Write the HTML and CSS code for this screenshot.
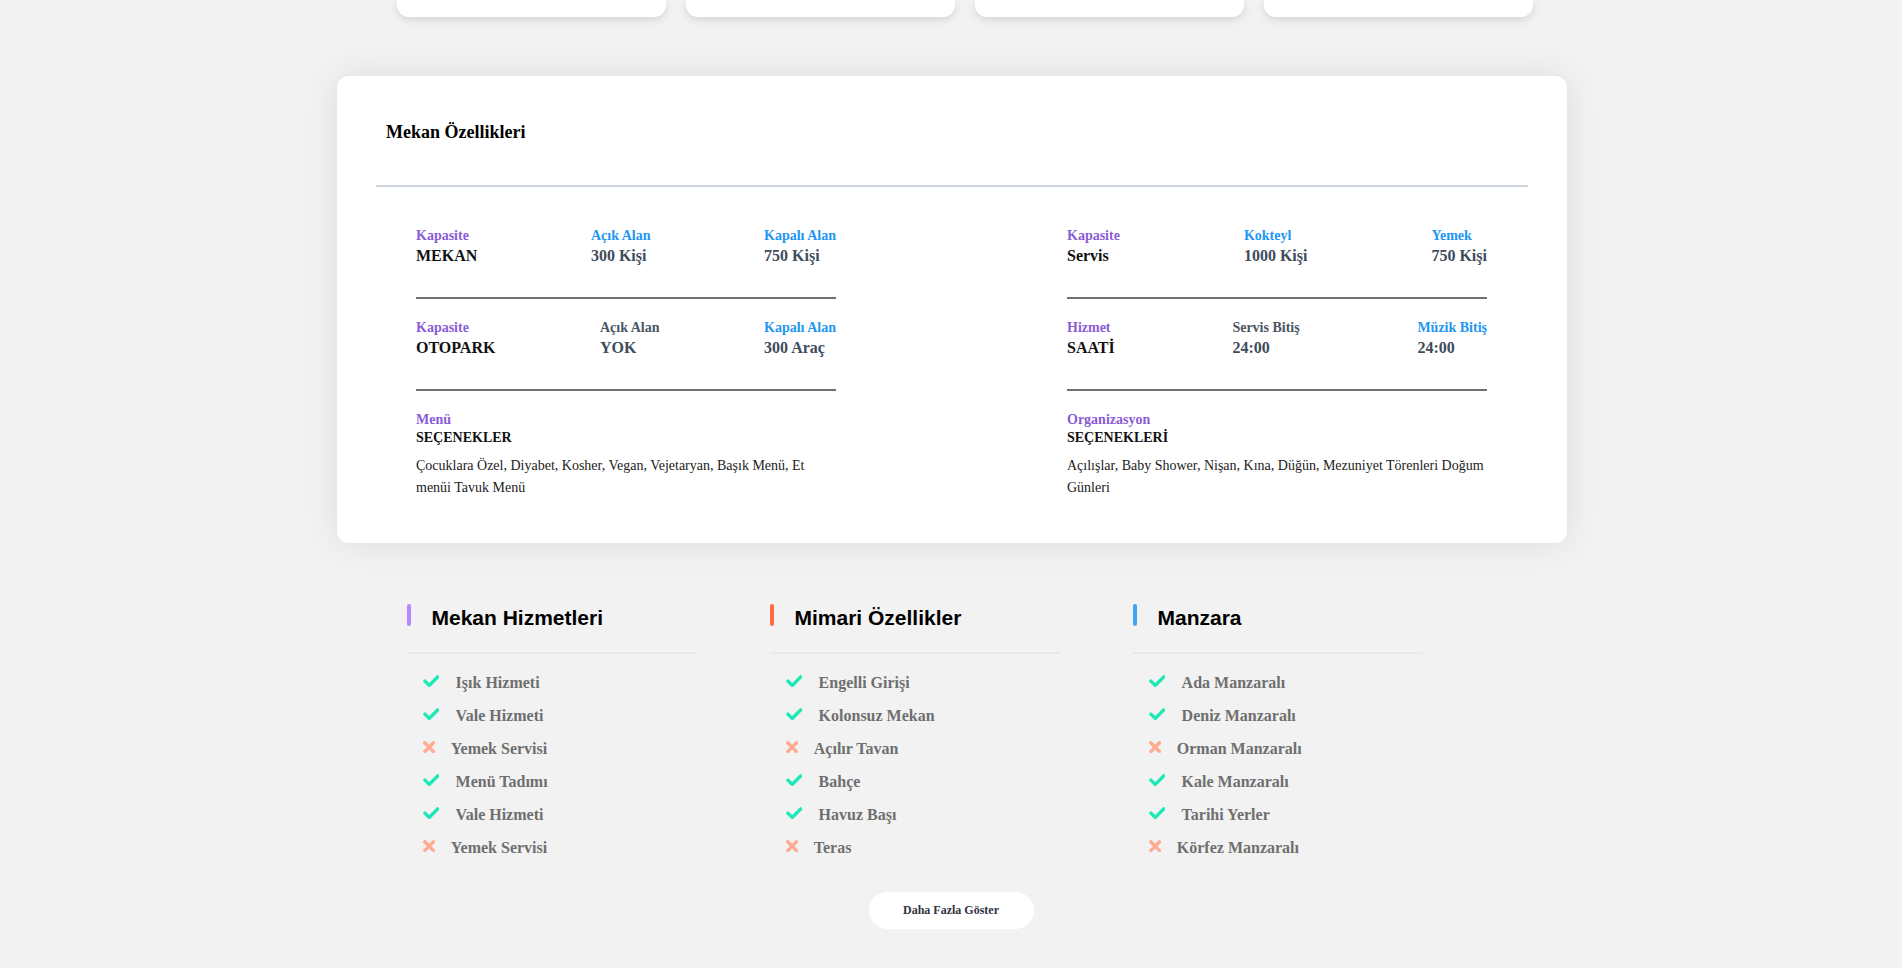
FILE: index.html
```html
<!DOCTYPE html>
<html lang="tr">
<head>
<meta charset="utf-8">
<title>Mekan Özellikleri</title>
<link rel="stylesheet" href="styles.css">
</head>
<body>
<div class="top-cards">
  <div class="top-card"></div>
  <div class="top-card"></div>
  <div class="top-card"></div>
  <div class="top-card"></div>
</div>

<section class="main-card">
  <h3 class="main-title">Mekan Özellikleri</h3>
  <div class="main-divider"></div>
  <div class="groups">
    <div class="group">
      <div class="spec-row">
        <div class="cell"><div class="lbl purple">Kapasite</div><div class="val black">MEKAN</div></div>
        <div class="cell"><div class="lbl blue">Açık Alan</div><div class="val slate">300 Kişi</div></div>
        <div class="cell"><div class="lbl blue">Kapalı Alan</div><div class="val slate">750 Kişi</div></div>
      </div>
      <div class="spec-row">
        <div class="cell"><div class="lbl purple">Kapasite</div><div class="val black">OTOPARK</div></div>
        <div class="cell"><div class="lbl grey">Açık Alan</div><div class="val slate">YOK</div></div>
        <div class="cell"><div class="lbl blue">Kapalı Alan</div><div class="val slate">300 Araç</div></div>
      </div>
      <div class="options">
        <div class="lbl purple">Menü</div>
        <div class="opt-title">SEÇENEKLER</div>
        <p class="opt-text">Çocuklara Özel, Diyabet, Kosher, Vegan, Vejetaryan, Başık Menü, Et menüi Tavuk Menü</p>
      </div>
    </div>
    <div class="group">
      <div class="spec-row">
        <div class="cell"><div class="lbl purple">Kapasite</div><div class="val black">Servis</div></div>
        <div class="cell"><div class="lbl blue">Kokteyl</div><div class="val slate">1000 Kişi</div></div>
        <div class="cell"><div class="lbl blue">Yemek</div><div class="val slate">750 Kişi</div></div>
      </div>
      <div class="spec-row">
        <div class="cell"><div class="lbl purple">Hizmet</div><div class="val black">SAATİ</div></div>
        <div class="cell"><div class="lbl grey">Servis Bitiş</div><div class="val slate">24:00</div></div>
        <div class="cell"><div class="lbl blue">Müzik Bitiş</div><div class="val slate">24:00</div></div>
      </div>
      <div class="options">
        <div class="lbl purple">Organizasyon</div>
        <div class="opt-title">SEÇENEKLERİ</div>
        <p class="opt-text">Açılışlar, Baby Shower, Nişan, Kına, Düğün, Mezuniyet Törenleri Doğum Günleri</p>
      </div>
    </div>
  </div>
</section>

<section class="features">
  <div class="feat-col">
    <div class="feat-head"><span class="bar bar-purple"></span><h4 class="feat-title">Mekan Hizmetleri</h4></div>
    <ul class="feat-list">
      <li class="yes"><svg class="ic-check" viewBox="0 64 512 384"><path d="M173.898 439.404l-166.4-166.4c-9.997-9.997-9.997-26.206 0-36.204l36.203-36.204c9.997-9.998 26.207-9.998 36.204 0L192 312.69 432.095 72.596c9.997-9.997 26.207-9.997 36.204 0l36.203 36.204c9.997 9.997 9.997 26.206 0 36.204l-294.4 294.401c-9.998 9.997-26.207 9.997-36.204-.001z"/></svg>Işık Hizmeti</li>
      <li class="yes"><svg class="ic-check" viewBox="0 64 512 384"><path d="M173.898 439.404l-166.4-166.4c-9.997-9.997-9.997-26.206 0-36.204l36.203-36.204c9.997-9.998 26.207-9.998 36.204 0L192 312.69 432.095 72.596c9.997-9.997 26.207-9.997 36.204 0l36.203 36.204c9.997 9.997 9.997 26.206 0 36.204l-294.4 294.401c-9.998 9.997-26.207 9.997-36.204-.001z"/></svg>Vale Hizmeti</li>
      <li class="no"><svg class="ic-times" viewBox="0 80 352 352"><path d="M242.72 256l100.07-100.07c12.28-12.28 12.28-32.19 0-44.48l-22.24-22.24c-12.28-12.28-32.19-12.28-44.48 0L176 189.28 75.93 89.21c-12.28-12.28-32.19-12.28-44.48 0L9.21 111.45c-12.28 12.28-12.28 32.19 0 44.48L109.28 256 9.21 356.07c-12.28 12.28-12.28 32.19 0 44.48l22.24 22.24c12.28 12.28 32.2 12.28 44.48 0L176 322.72l100.07 100.07c12.28 12.28 32.2 12.28 44.48 0l22.24-22.24c12.28-12.28 12.28-32.19 0-44.48L242.72 256z"/></svg>Yemek Servisi</li>
      <li class="yes"><svg class="ic-check" viewBox="0 64 512 384"><path d="M173.898 439.404l-166.4-166.4c-9.997-9.997-9.997-26.206 0-36.204l36.203-36.204c9.997-9.998 26.207-9.998 36.204 0L192 312.69 432.095 72.596c9.997-9.997 26.207-9.997 36.204 0l36.203 36.204c9.997 9.997 9.997 26.206 0 36.204l-294.4 294.401c-9.998 9.997-26.207 9.997-36.204-.001z"/></svg>Menü Tadımı</li>
      <li class="yes"><svg class="ic-check" viewBox="0 64 512 384"><path d="M173.898 439.404l-166.4-166.4c-9.997-9.997-9.997-26.206 0-36.204l36.203-36.204c9.997-9.998 26.207-9.998 36.204 0L192 312.69 432.095 72.596c9.997-9.997 26.207-9.997 36.204 0l36.203 36.204c9.997 9.997 9.997 26.206 0 36.204l-294.4 294.401c-9.998 9.997-26.207 9.997-36.204-.001z"/></svg>Vale Hizmeti</li>
      <li class="no"><svg class="ic-times" viewBox="0 80 352 352"><path d="M242.72 256l100.07-100.07c12.28-12.28 12.28-32.19 0-44.48l-22.24-22.24c-12.28-12.28-32.19-12.28-44.48 0L176 189.28 75.93 89.21c-12.28-12.28-32.19-12.28-44.48 0L9.21 111.45c-12.28 12.28-12.28 32.19 0 44.48L109.28 256 9.21 356.07c-12.28 12.28-12.28 32.19 0 44.48l22.24 22.24c12.28 12.28 32.2 12.28 44.48 0L176 322.72l100.07 100.07c12.28 12.28 32.2 12.28 44.48 0l22.24-22.24c12.28-12.28 12.28-32.19 0-44.48L242.72 256z"/></svg>Yemek Servisi</li>
    </ul>
  </div>
  <div class="feat-col">
    <div class="feat-head"><span class="bar bar-orange"></span><h4 class="feat-title">Mimari Özellikler</h4></div>
    <ul class="feat-list">
      <li class="yes"><svg class="ic-check" viewBox="0 64 512 384"><path d="M173.898 439.404l-166.4-166.4c-9.997-9.997-9.997-26.206 0-36.204l36.203-36.204c9.997-9.998 26.207-9.998 36.204 0L192 312.69 432.095 72.596c9.997-9.997 26.207-9.997 36.204 0l36.203 36.204c9.997 9.997 9.997 26.206 0 36.204l-294.4 294.401c-9.998 9.997-26.207 9.997-36.204-.001z"/></svg>Engelli Girişi</li>
      <li class="yes"><svg class="ic-check" viewBox="0 64 512 384"><path d="M173.898 439.404l-166.4-166.4c-9.997-9.997-9.997-26.206 0-36.204l36.203-36.204c9.997-9.998 26.207-9.998 36.204 0L192 312.69 432.095 72.596c9.997-9.997 26.207-9.997 36.204 0l36.203 36.204c9.997 9.997 9.997 26.206 0 36.204l-294.4 294.401c-9.998 9.997-26.207 9.997-36.204-.001z"/></svg>Kolonsuz Mekan</li>
      <li class="no"><svg class="ic-times" viewBox="0 80 352 352"><path d="M242.72 256l100.07-100.07c12.28-12.28 12.28-32.19 0-44.48l-22.24-22.24c-12.28-12.28-32.19-12.28-44.48 0L176 189.28 75.93 89.21c-12.28-12.28-32.19-12.28-44.48 0L9.21 111.45c-12.28 12.28-12.28 32.19 0 44.48L109.28 256 9.21 356.07c-12.28 12.28-12.28 32.19 0 44.48l22.24 22.24c12.28 12.28 32.2 12.28 44.48 0L176 322.72l100.07 100.07c12.28 12.28 32.2 12.28 44.48 0l22.24-22.24c12.28-12.28 12.28-32.19 0-44.48L242.72 256z"/></svg>Açılır Tavan</li>
      <li class="yes"><svg class="ic-check" viewBox="0 64 512 384"><path d="M173.898 439.404l-166.4-166.4c-9.997-9.997-9.997-26.206 0-36.204l36.203-36.204c9.997-9.998 26.207-9.998 36.204 0L192 312.69 432.095 72.596c9.997-9.997 26.207-9.997 36.204 0l36.203 36.204c9.997 9.997 9.997 26.206 0 36.204l-294.4 294.401c-9.998 9.997-26.207 9.997-36.204-.001z"/></svg>Bahçe</li>
      <li class="yes"><svg class="ic-check" viewBox="0 64 512 384"><path d="M173.898 439.404l-166.4-166.4c-9.997-9.997-9.997-26.206 0-36.204l36.203-36.204c9.997-9.998 26.207-9.998 36.204 0L192 312.69 432.095 72.596c9.997-9.997 26.207-9.997 36.204 0l36.203 36.204c9.997 9.997 9.997 26.206 0 36.204l-294.4 294.401c-9.998 9.997-26.207 9.997-36.204-.001z"/></svg>Havuz Başı</li>
      <li class="no"><svg class="ic-times" viewBox="0 80 352 352"><path d="M242.72 256l100.07-100.07c12.28-12.28 12.28-32.19 0-44.48l-22.24-22.24c-12.28-12.28-32.19-12.28-44.48 0L176 189.28 75.93 89.21c-12.28-12.28-32.19-12.28-44.48 0L9.21 111.45c-12.28 12.28-12.28 32.19 0 44.48L109.28 256 9.21 356.07c-12.28 12.28-12.28 32.19 0 44.48l22.24 22.24c12.28 12.28 32.2 12.28 44.48 0L176 322.72l100.07 100.07c12.28 12.28 32.2 12.28 44.48 0l22.24-22.24c12.28-12.28 12.28-32.19 0-44.48L242.72 256z"/></svg>Teras</li>
    </ul>
  </div>
  <div class="feat-col">
    <div class="feat-head"><span class="bar bar-blue"></span><h4 class="feat-title">Manzara</h4></div>
    <ul class="feat-list">
      <li class="yes"><svg class="ic-check" viewBox="0 64 512 384"><path d="M173.898 439.404l-166.4-166.4c-9.997-9.997-9.997-26.206 0-36.204l36.203-36.204c9.997-9.998 26.207-9.998 36.204 0L192 312.69 432.095 72.596c9.997-9.997 26.207-9.997 36.204 0l36.203 36.204c9.997 9.997 9.997 26.206 0 36.204l-294.4 294.401c-9.998 9.997-26.207 9.997-36.204-.001z"/></svg>Ada Manzaralı</li>
      <li class="yes"><svg class="ic-check" viewBox="0 64 512 384"><path d="M173.898 439.404l-166.4-166.4c-9.997-9.997-9.997-26.206 0-36.204l36.203-36.204c9.997-9.998 26.207-9.998 36.204 0L192 312.69 432.095 72.596c9.997-9.997 26.207-9.997 36.204 0l36.203 36.204c9.997 9.997 9.997 26.206 0 36.204l-294.4 294.401c-9.998 9.997-26.207 9.997-36.204-.001z"/></svg>Deniz Manzaralı</li>
      <li class="no"><svg class="ic-times" viewBox="0 80 352 352"><path d="M242.72 256l100.07-100.07c12.28-12.28 12.28-32.19 0-44.48l-22.24-22.24c-12.28-12.28-32.19-12.28-44.48 0L176 189.28 75.93 89.21c-12.28-12.28-32.19-12.28-44.48 0L9.21 111.45c-12.28 12.28-12.28 32.19 0 44.48L109.28 256 9.21 356.07c-12.28 12.28-12.28 32.19 0 44.48l22.24 22.24c12.28 12.28 32.2 12.28 44.48 0L176 322.72l100.07 100.07c12.28 12.28 32.2 12.28 44.48 0l22.24-22.24c12.28-12.28 12.28-32.19 0-44.48L242.72 256z"/></svg>Orman Manzaralı</li>
      <li class="yes"><svg class="ic-check" viewBox="0 64 512 384"><path d="M173.898 439.404l-166.4-166.4c-9.997-9.997-9.997-26.206 0-36.204l36.203-36.204c9.997-9.998 26.207-9.998 36.204 0L192 312.69 432.095 72.596c9.997-9.997 26.207-9.997 36.204 0l36.203 36.204c9.997 9.997 9.997 26.206 0 36.204l-294.4 294.401c-9.998 9.997-26.207 9.997-36.204-.001z"/></svg>Kale Manzaralı</li>
      <li class="yes"><svg class="ic-check" viewBox="0 64 512 384"><path d="M173.898 439.404l-166.4-166.4c-9.997-9.997-9.997-26.206 0-36.204l36.203-36.204c9.997-9.998 26.207-9.998 36.204 0L192 312.69 432.095 72.596c9.997-9.997 26.207-9.997 36.204 0l36.203 36.204c9.997 9.997 9.997 26.206 0 36.204l-294.4 294.401c-9.998 9.997-26.207 9.997-36.204-.001z"/></svg>Tarihi Yerler</li>
      <li class="no"><svg class="ic-times" viewBox="0 80 352 352"><path d="M242.72 256l100.07-100.07c12.28-12.28 12.28-32.19 0-44.48l-22.24-22.24c-12.28-12.28-32.19-12.28-44.48 0L176 189.28 75.93 89.21c-12.28-12.28-32.19-12.28-44.48 0L9.21 111.45c-12.28 12.28-12.28 32.19 0 44.48L109.28 256 9.21 356.07c-12.28 12.28-12.28 32.19 0 44.48l22.24 22.24c12.28 12.28 32.2 12.28 44.48 0L176 322.72l100.07 100.07c12.28 12.28 32.2 12.28 44.48 0l22.24-22.24c12.28-12.28 12.28-32.19 0-44.48L242.72 256z"/></svg>Körfez Manzaralı</li>
    </ul>
  </div>
</section>

<div class="more-wrap">
  <button class="more-btn" type="button">Daha Fazla Göster</button>
</div>
</body>
</html>
```

FILE: styles.css
```css
* { box-sizing: border-box; }

body {
  margin: 0;
  background: #f2f2f2;
  font-family: "Liberation Serif", "Times New Roman", serif;
  color: #111;
}

.top-cards {
  display: flex;
  gap: 20px;
  width: 1136px;
  margin-left: calc(50% - 554px);
}
.top-card {
  width: 269px;
  height: 17px;
  background: #fff;
  border-radius: 0 0 12px 12px;
  box-shadow: 0 3px 8px rgba(0, 0, 0, 0.12);
}

/* main card */
.main-card {
  width: 1230px;
  margin: 59px 0 0 calc(50% - 614px);
  background: #fff;
  border-radius: 12px;
  box-shadow: 0 0 36px rgba(0, 0, 0, 0.09);
  padding: 45px 39px 44px 39px;
}
.main-title {
  margin: 0;
  padding-left: 10px;
  font-size: 18px;
  line-height: 22px;
  font-weight: bold;
  color: #000;
}
.main-divider {
  margin-top: 42px;
  height: 2px;
  background: #ccd3da;
}
.groups {
  display: flex;
  justify-content: space-between;
  padding: 41px 41px 0 40px;
}
.group {
  width: 420px;
}
.spec-row {
  display: flex;
  justify-content: space-between;
  padding-bottom: 29px;
  border-bottom: 2px solid #707070;
  margin-bottom: 21px;
}
.lbl {
  font-size: 14px;
  line-height: 16px;
  font-weight: bold;
}
.val {
  font-size: 16px;
  line-height: 24px;
  font-weight: bold;
}
.purple { color: #8a5cd6; }
.blue { color: #2196f3; }
.grey { color: #4b5563; }
.black { color: #111; }
.slate { color: #3e4b5b; }

.opt-title {
  font-size: 14px;
  line-height: 19px;
  font-weight: bold;
  color: #111;
}
.opt-text {
  margin: 8px 0 0;
  font-size: 14px;
  line-height: 22px;
  color: #222;
}

/* feature lists */
.features {
  width: 1089px;
  margin: 61px auto 0;
  display: grid;
  grid-template-columns: repeat(3, 363px);
}
.feat-col {
  width: 290px;
}
.feat-head {
  display: flex;
  align-items: flex-start;
  padding-bottom: 20px;
  border-bottom: 2px solid #e6eaef;
}
.bar {
  width: 4px;
  height: 22px;
  border-radius: 2px;
  flex: none;
}
.bar-purple { background: #b388ff; }
.bar-orange { background: #ff6e40; }
.bar-blue { background: #42a5f5; }
.feat-title {
  margin: 0 0 0 21px;
  font-family: "Liberation Sans", Arial, sans-serif;
  font-size: 21px;
  line-height: 28px;
  font-weight: bold;
  color: #000;
}
.feat-list {
  list-style: none;
  margin: 12px 0 0;
  padding: 0 0 0 16px;
}
.feat-list li {
  display: flex;
  align-items: center;
  height: 33px;
  font-size: 16px;
  font-weight: bold;
  color: #6f6f6f;
}
.ic-check {
  width: 16.6px;
  height: 12.5px;
  margin-right: 16.5px;
  margin-top: -3px;
  fill: #1de9b6;
  flex: none;
}
.ic-times {
  width: 12.3px;
  height: 12.3px;
  margin-right: 16px;
  margin-top: -3px;
  fill: #ffab91;
  flex: none;
}

.more-wrap {
  display: flex;
  justify-content: center;
  padding: 28px 0 60px;
}
.more-btn {
  width: 165px;
  height: 37px;
  border: none;
  border-radius: 19px;
  background: #fff;
  font-family: "Liberation Serif", "Times New Roman", serif;
  font-size: 12px;
  font-weight: bold;
  color: #2f3542;
  cursor: pointer;
}
```
